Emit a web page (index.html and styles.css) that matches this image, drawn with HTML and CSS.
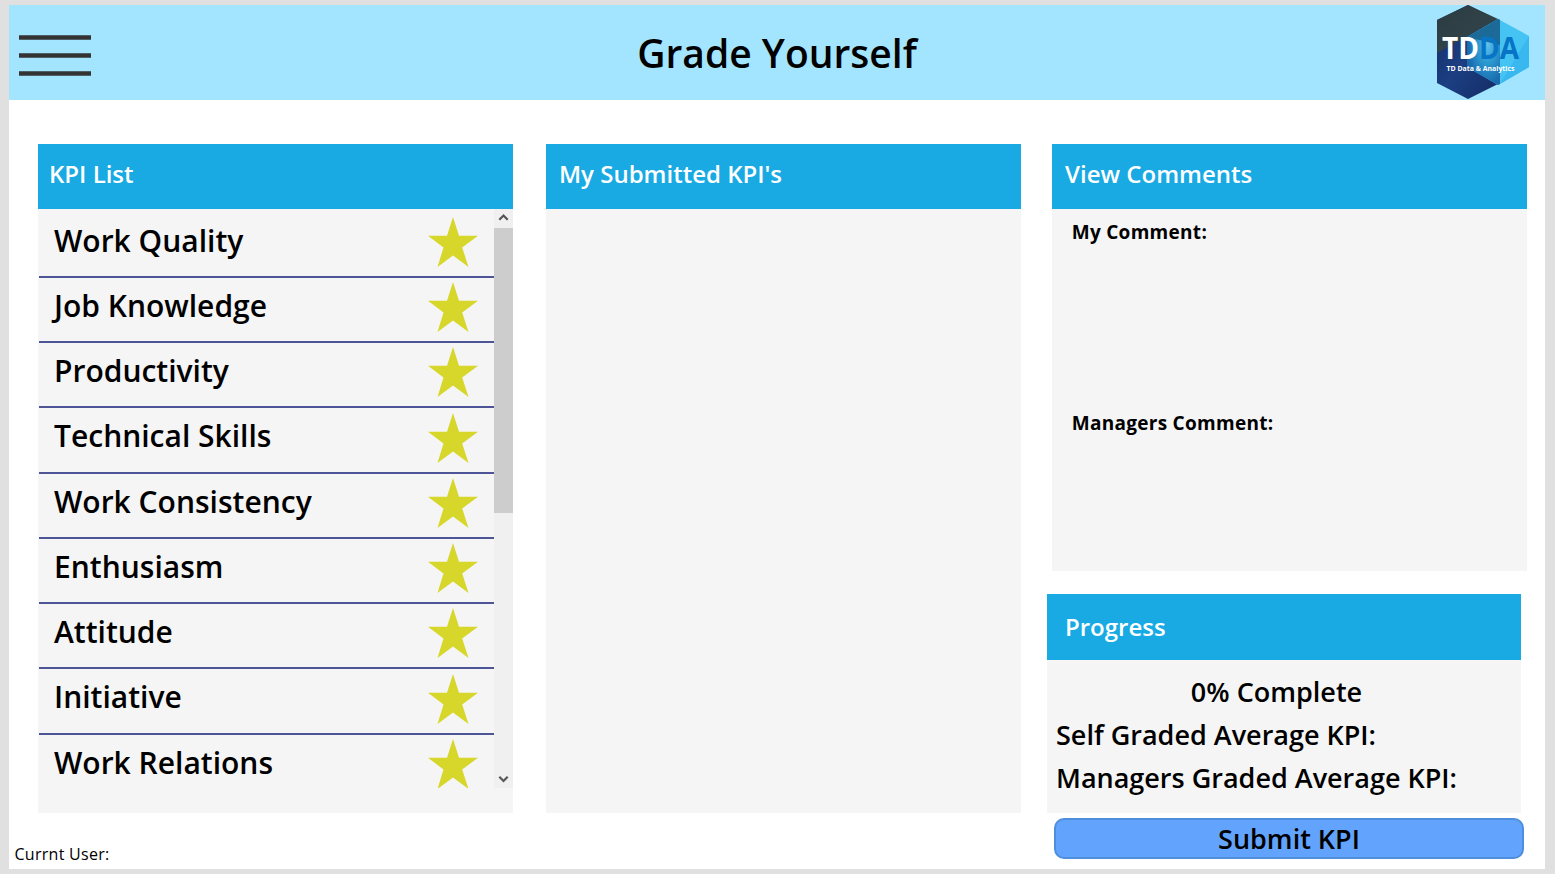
FILE: index.html
```html
<!DOCTYPE html>
<html lang="en">
<head>
<meta charset="utf-8">
<title>Grade Yourself</title>
<link rel="stylesheet" href="styles.css">
</head>
<body>
<svg width="0" height="0" class="defs"><symbol id="star" viewBox="0 0 50 50"><path d="M25 0L31 18.7H50L34.2 30.5L40.5 50L25 38.4L9.5 50L15.5 30.5L0 18.7H19Z"/></symbol></svg>
<div class="app">
  <header class="topbar">
    <svg class="menu" width="72" height="41" viewBox="0 0 72 41"><path d="M0 2.5H72M0 20.5H72M0 38.5H72"/></svg>
    <h1 class="title"><span>Grade Yourself</span></h1>
    <svg class="logo" width="94" height="95" viewBox="0 0 94 95">
      <defs>
        <linearGradient id="navy" x1="0" y1="0" x2="1" y2="1"><stop offset="0" stop-color="#152b63"/><stop offset=".5" stop-color="#1b3f82"/><stop offset="1" stop-color="#152a63"/></linearGradient>
        <linearGradient id="slate" x1="0" y1="0" x2="1" y2="1"><stop offset="0" stop-color="#2b3b42"/><stop offset="1" stop-color="#34474d"/></linearGradient>
        <radialGradient id="glow" cx=".62" cy=".38" r=".6"><stop offset="0" stop-color="#62c2ee"/><stop offset=".45" stop-color="#2c9bd2"/><stop offset="1" stop-color="#1a6cae"/></radialGradient>
      </defs>
      <path fill="url(#navy)" d="M1 15L32 0L64 16V78L32 94L1 78Z"/>
      <path fill="url(#slate)" d="M1 15L32 0L62 14L1 48Z"/>
      <path fill="#45c4f4" d="M62 14L93 31V62L62 80L31 62V32Z"/>
      <path fill="#38b8ee" d="M64 79L93 31V62Z"/>
      <path fill="url(#glow)" d="M62 14L64 15V79L62 80L31 62V32Z"/>
      <path fill="#1c6a97" d="M62 14L64 15V40L31 32Z"/>
      <text x="6" y="54.3" class="mark" fill="#fff" textLength="37" lengthAdjust="spacingAndGlyphs">TD</text>
      <text x="43" y="54.3" class="mark" fill="#0874c5" textLength="40" lengthAdjust="spacingAndGlyphs">DA</text>
      <text x="10.5" y="66" class="tag" textLength="68" lengthAdjust="spacingAndGlyphs">TD Data &amp; Analytics</text>
    </svg>
  </header>
  <main class="columns">
    <section class="panel">
      <h2 class="head kpi-head"><span>KPI List</span></h2>
      <div class="list">
        <ul class="rows">
          <li><span>Work Quality</span><svg class="star"><use href="#star"/></svg></li>
          <li><span>Job Knowledge</span><svg class="star"><use href="#star"/></svg></li>
          <li><span>Productivity</span><svg class="star"><use href="#star"/></svg></li>
          <li><span>Technical Skills</span><svg class="star"><use href="#star"/></svg></li>
          <li><span>Work Consistency</span><svg class="star"><use href="#star"/></svg></li>
          <li><span>Enthusiasm</span><svg class="star"><use href="#star"/></svg></li>
          <li><span>Attitude</span><svg class="star"><use href="#star"/></svg></li>
          <li><span>Initiative</span><svg class="star"><use href="#star"/></svg></li>
          <li><span>Work Relations</span><svg class="star"><use href="#star"/></svg></li>
        </ul>
        <div class="scroll">
          <svg width="19" height="19" viewBox="0 0 19 19"><path d="M5.3 10.8L9.5 6.5L13.7 10.8"/></svg>
          <div class="thumb"></div>
          <svg width="19" height="19" viewBox="0 0 19 19"><path d="M5.3 7.7L9.5 12L13.7 7.7"/></svg>
        </div>
      </div>
    </section>
    <section class="panel">
      <h2 class="head"><span>My Submitted KPI's</span></h2>
    </section>
    <div class="side">
      <section class="panel comments">
        <h2 class="head"><span>View Comments</span></h2>
        <p class="comment">My Comment:</p>
        <p class="comment">Managers Comment:</p>
      </section>
      <section class="panel progress">
        <h2 class="head"><span>Progress</span></h2>
        <p class="stat complete"><span>0% Complete</span></p>
        <p class="stat"><span>Self Graded Average KPI:</span></p>
        <p class="stat"><span>Managers Graded Average KPI:</span></p>
      </section>
      <button class="submit"><span>Submit KPI</span></button>
    </div>
  </main>
  <footer class="user"><span>Currnt User:</span></footer>
</div>
</body>
</html>
```
FILE: styles.css
```css
* { box-sizing: border-box; margin: 0; padding: 0; }
body {
  height: 874px;
  padding: 5px 10px 5px 9px;
  background: #e0e0e0;
  font-family: "Open Sans", "Noto Sans", sans-serif;
  font-weight: 600;
  color: #000;
  overflow: hidden;
}
.defs { display: block; height: 0; }
.app { height: 864px; background: #fff; display: flex; flex-direction: column; }
.topbar {
  height: 95px;
  flex: none;
  background: #a3e5ff;
  display: grid;
  grid-template-columns: 110px 1fr 110px;
  padding: 0 15px 0 10px;
}
.menu { margin-top: 30px; }
.menu path { stroke: #333; stroke-width: 4.6; }
.title { font-size: 39px; font-weight: 600; line-height: 95px; text-align: center; padding-left: 5px; }
.logo { justify-self: end; }
.mark { font: 700 30px "Open Sans", sans-serif; }
.tag { font: 700 7.5px "Open Sans", sans-serif; fill: #fff; }
.columns {
  height: 720px;
  padding: 44px 18px 0 29px;
  display: grid;
  grid-template-columns: 475px 475px 480px;
  column-gap: 33px;
}
.panel { background: #f5f5f5; height: 669px; }
.head {
  height: 65px;
  line-height: 60px;
  padding-left: 13px;
  background: #19aae4;
  color: #fff;
  font-size: 24px;
  font-weight: 600;
}
.kpi-head { padding-left: 11px; }
.list { display: flex; height: 579px; overflow: hidden; }
.rows { list-style: none; width: 456px; padding: 3.5px 0 0 1px; }
.rows li {
  height: 65.25px;
  padding: 0 16px 0 15px;
  border-bottom: 2px solid #4d5597;
  display: flex;
  justify-content: space-between;
  font-size: 30px;
  line-height: 55.4px;
}
.rows li:last-child { border-bottom: 0; }
.star { width: 50px; height: 50px; margin-top: 4.3px; fill: #d6d62b; }
.scroll { width: 19px; background: #f0f0f0; display: flex; flex-direction: column; }
.scroll svg:last-child { margin-top: auto; }
.scroll path { fill: none; stroke: #555; stroke-width: 2.2; }
.thumb { height: 285px; background: #cdcdcd; }
.side { display: flex; flex-direction: column; margin-left: -7px; width: 480px; }
.comments { width: 475px; height: 427px; margin-left: 5px; }
.comment {
  height: 191px;
  padding: 10px 0 0 19.7px;
  font-size: 19px;
  font-weight: 700;
  line-height: 26px;
  letter-spacing: .29px;
}
.comment + .comment { height: auto; }
.progress { width: 474px; height: 219px; margin-top: 23px; }
.progress .head { height: 66px; line-height: 66px; padding-left: 18px; }
.stat { font-size: 27px; line-height: 43px; padding-left: 9px; }
.complete { padding: 10px 0 0; text-align: center; margin-right: 15px; }
.submit {
  margin: 5px 0 0 7px;
  width: 470px;
  height: 41px;
  flex: none;
  border: 2px solid #4f8edc;
  border-radius: 10px;
  background: #62a4fd;
  color: #000;
  font: 600 27px/37px "Open Sans", "Noto Sans", sans-serif;
}
.user { font-size: 16px; font-weight: 400; line-height: 22px; padding: 23px 0 0 5.5px; letter-spacing: .28px; }
```
